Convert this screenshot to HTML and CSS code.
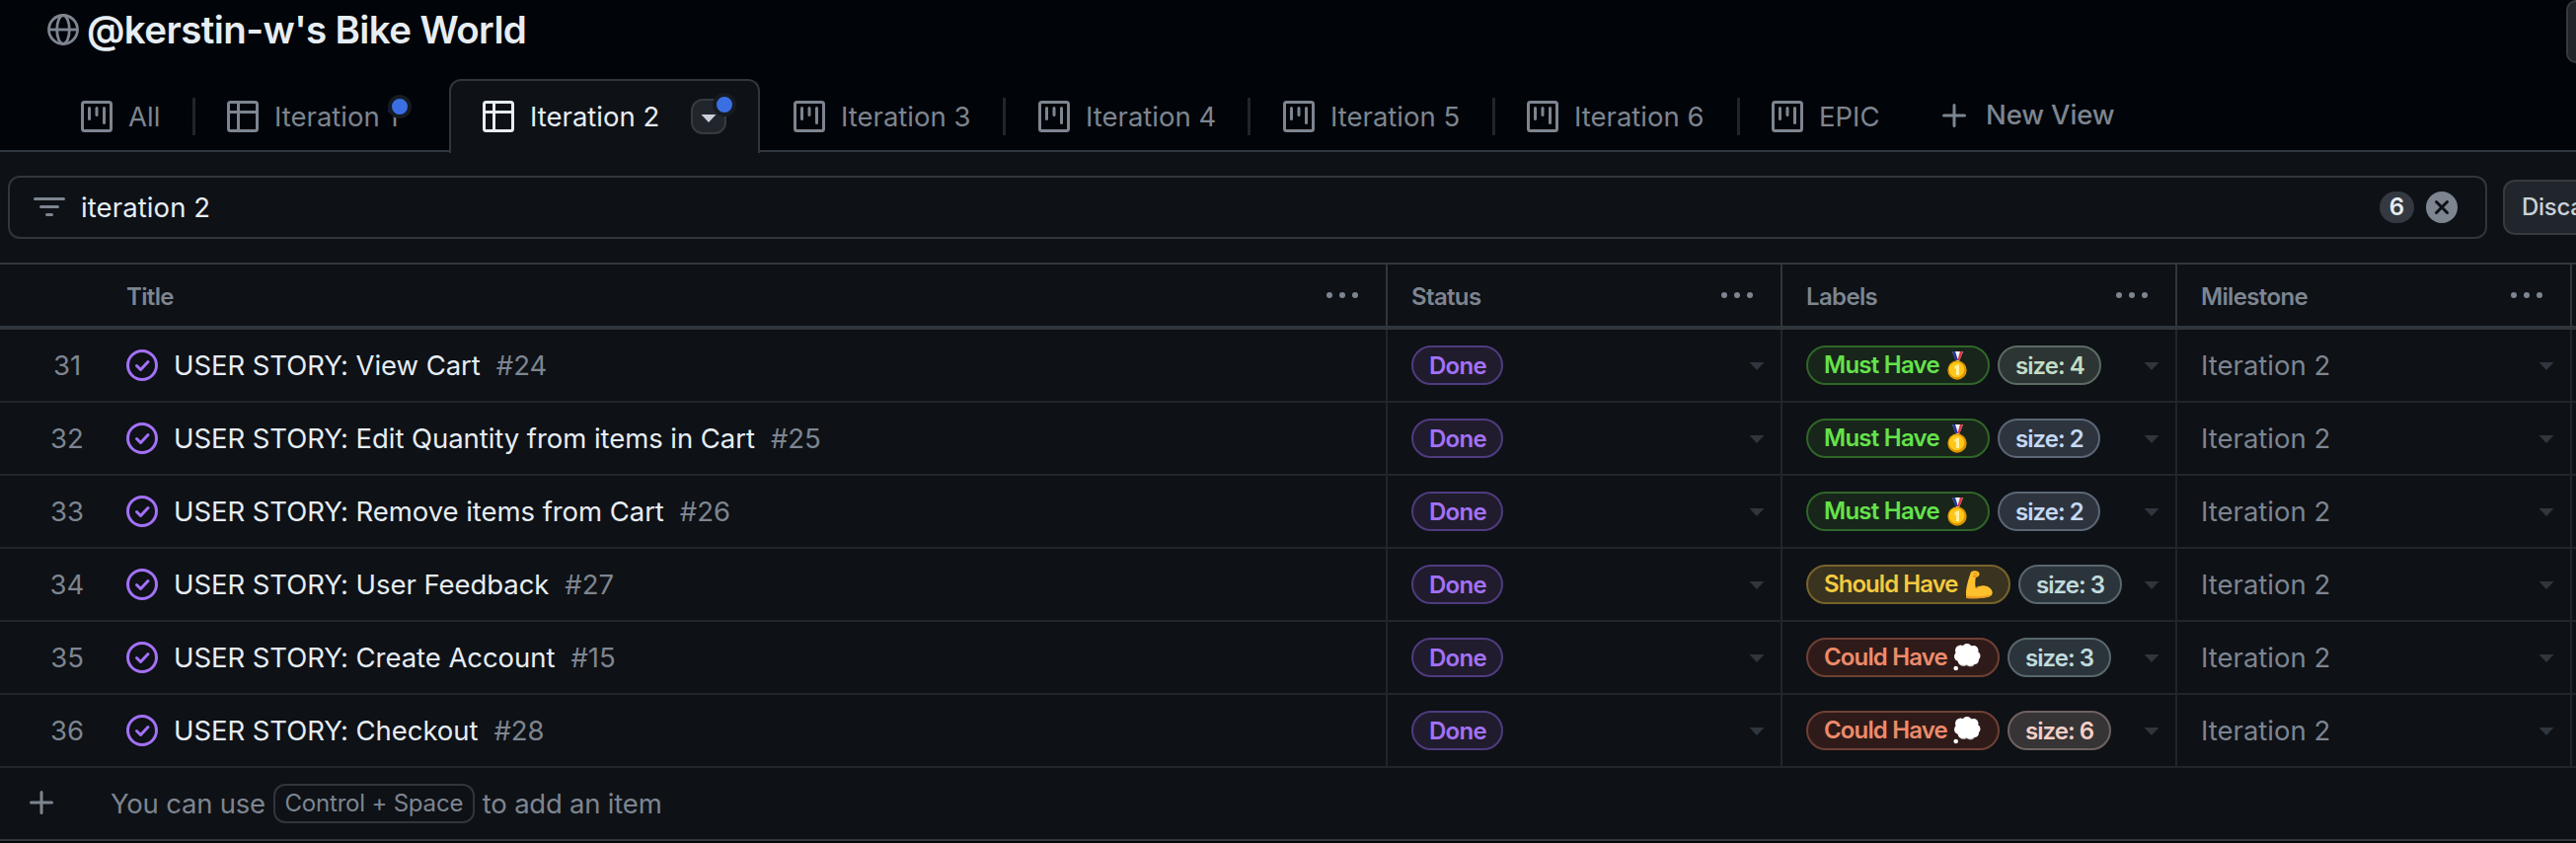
FILE: index.html
```html
<!DOCTYPE html>
<html lang="en">
<head>
<meta charset="utf-8">
<title>@kerstin-w's Bike World</title>
<link rel="stylesheet" href="styles.css">
</head>
<body>
<svg class="defs" aria-hidden="true">
  <symbol id="board" viewBox="0 0 32 32"><rect x="1.5" y="1.5" width="29" height="29" rx="2" fill="none" stroke="currentColor" stroke-width="3"/><path d="M8.5 7.5v11M16 7.5v7M23.5 7.5v15" fill="none" stroke="currentColor" stroke-width="3" stroke-linecap="round"/></symbol>
  <symbol id="grid" viewBox="0 0 32 32"><rect x="1.5" y="1.5" width="29" height="29" rx="2" fill="none" stroke="currentColor" stroke-width="3"/><path d="M1.5 11.5h29M11.5 1.5v29" fill="none" stroke="currentColor" stroke-width="3"/></symbol>
  <symbol id="check" viewBox="0 0 32 32"><circle cx="16" cy="16" r="14.5" fill="none" stroke="currentColor" stroke-width="3"/><path d="M10.5 16.5l4 4 7.500-8" fill="none" stroke="currentColor" stroke-width="3" stroke-linecap="round" stroke-linejoin="round"/></symbol>
  <symbol id="plus" viewBox="0 0 24 24"><path d="M12 1.500v21M1.500 12h21" fill="none" stroke="currentColor" stroke-width="3" stroke-linecap="round"/></symbol>
  <symbol id="dots" viewBox="0 0 32 6"><circle cx="3" cy="3" r="3"/><circle cx="16" cy="3" r="3"/><circle cx="29" cy="3" r="3"/></symbol>
  <symbol id="caret" viewBox="0 0 16 8"><path d="M.5 0h15L8 8z"/></symbol>
  <symbol id="medal" viewBox="0 0 20 29"><path d="M5 0l4 10h3L16 0z" fill="#f1f3f8"/><path d="M5 0h3l3 9H8z" fill="#263a94"/><path d="M15.800 0h-3L10.500 9h2z" fill="#dd3340"/><circle cx="10" cy="19" r="9.700" fill="#dc9600"/><circle cx="9.500" cy="18.500" r="7.800" fill="#ffc717"/><path d="M7 16l3-2.500h2V24H9v-7l-1.500 1z" fill="#fff0a0"/></symbol>
  <symbol id="arm" viewBox="0 0 28 29"><path d="M6 1.500C8.500-.3 14-.2 14.500 3c.3 2.500-2 3.500-4 4.500.3 3-1 7 .5 10.500 3.500-3.500 11-4 15 .5 3 3.500 2 7.500-3 8.500-7 1.200-15 1.500-21.500 1C-.5 21 3 10 6 1.500z" fill="#ffc02d"/><path d="M1.300 25.500c7 1.500 17 1 25-1-1 1.500-2 2.200-3.500 2.500-7 1.200-15 1.500-21.500 1z" fill="#ee9820"/><path d="M8.500 3h4M8 5.800l4-.5M11 18c1-1 1.500-1.500 3-2" fill="none" stroke="#dd8418" stroke-width="1.200"/></symbol>
  <symbol id="cloud" viewBox="0 0 28 28"><g fill="#fff"><circle cx="7.500" cy="7" r="5.500"/><circle cx="14" cy="5" r="5"/><circle cx="20.500" cy="7" r="5"/><circle cx="23" cy="12.500" r="4.500"/><circle cx="6" cy="13" r="5"/><circle cx="10" cy="17" r="5.500"/><circle cx="17" cy="18" r="5"/><circle cx="21.500" cy="16.500" r="4.500"/><path d="M6 6h16v12H6z"/><circle cx="2.700" cy="25" r="2.300"/></g><path d="M7 21c2 1.500 5 1.500 7 .5 2 2 6 2 8-1" fill="none" stroke="#ccc" stroke-width="1"/></symbol>
</svg>
<header class="top">
  <div class="heading">
    <svg class="globe" viewBox="0 0 32 32" stroke="currentColor" stroke-width="2.800"><circle cx="16" cy="16" r="14.500"/><ellipse cx="16" cy="16" rx="6.300" ry="14.500"/><path d="M1.500 16h29"/></svg>
    <h1>@kerstin-w's Bike World</h1>
    <button class="corner" aria-label="More"></button>
  </div>
  <nav class="tabs">
    <a class="tab first sep"><svg><use href="#board"/></svg><span>All</span></a>
    <a class="tab second"><svg><use href="#grid"/></svg><span>Iteration 1</span><i class="dot"></i></a>
    <a class="tab active"><svg><use href="#grid"/></svg><span>Iteration 2</span><b class="menu"><svg><use href="#caret"/></svg><i class="dot"></i></b></a>
    <a class="tab sep"><svg><use href="#board"/></svg><span>Iteration 3</span></a>
    <a class="tab sep"><svg><use href="#board"/></svg><span>Iteration 4</span></a>
    <a class="tab sep"><svg><use href="#board"/></svg><span>Iteration 5</span></a>
    <a class="tab sep sixth"><svg><use href="#board"/></svg><span>Iteration 6</span></a>
    <a class="tab epic"><svg><use href="#board"/></svg><span>EPIC</span></a>
    <a class="new"><svg><use href="#plus"/></svg><span>New View</span></a>
  </nav>
</header>
<section class="filters">
  <div class="search">
    <svg class="funnel" viewBox="0 0 32 20"><path d="M1.500 1.500h29M7.500 9.500h17M13.500 17.500h5" stroke="currentColor" stroke-width="3" stroke-linecap="round"/></svg>
    <span class="query">iteration 2</span>
    <span class="count">6</span>
    <svg class="clear" viewBox="0 0 32 32"><circle cx="16" cy="16" r="16" fill="#7d8590"/><path d="M10.500 10.500l11 11M21.500 10.500l-11 11" stroke="#0e1116" stroke-width="3" stroke-linecap="round"/></svg>
  </div>
  <button class="discard">Discard</button>
</section>
<main class="table">
  <div class="row head">
    <div class="cell title"><span>Title</span><svg><use href="#dots"/></svg></div>
    <div class="cell"><span>Status</span><svg><use href="#dots"/></svg></div>
    <div class="cell"><span>Labels</span><svg><use href="#dots"/></svg></div>
    <div class="cell"><span>Milestone</span><svg><use href="#dots"/></svg></div>
  </div>
  <div class="row">
    <div class="cell title"><span class="num">31</span><svg class="done"><use href="#check"/></svg><span class="name">USER STORY: View Cart</span><span class="id">#24</span></div>
    <div class="cell"><span class="pill status">Done</span><svg class="caret"><use href="#caret"/></svg></div>
    <div class="cell"><span class="pill must">Must Have<svg><use href="#medal"/></svg></span><span class="pill size s4">size: 4</span><svg class="caret"><use href="#caret"/></svg></div>
    <div class="cell"><span class="it">Iteration 2</span><svg class="caret"><use href="#caret"/></svg></div>
  </div>
  <div class="row">
    <div class="cell title"><span class="num">32</span><svg class="done"><use href="#check"/></svg><span class="name">USER STORY: Edit Quantity from items in Cart</span><span class="id">#25</span></div>
    <div class="cell"><span class="pill status">Done</span><svg class="caret"><use href="#caret"/></svg></div>
    <div class="cell"><span class="pill must">Must Have<svg><use href="#medal"/></svg></span><span class="pill size s2">size: 2</span><svg class="caret"><use href="#caret"/></svg></div>
    <div class="cell"><span class="it">Iteration 2</span><svg class="caret"><use href="#caret"/></svg></div>
  </div>
  <div class="row">
    <div class="cell title"><span class="num">33</span><svg class="done"><use href="#check"/></svg><span class="name">USER STORY: Remove items from Cart</span><span class="id">#26</span></div>
    <div class="cell"><span class="pill status">Done</span><svg class="caret"><use href="#caret"/></svg></div>
    <div class="cell"><span class="pill must">Must Have<svg><use href="#medal"/></svg></span><span class="pill size s2">size: 2</span><svg class="caret"><use href="#caret"/></svg></div>
    <div class="cell"><span class="it">Iteration 2</span><svg class="caret"><use href="#caret"/></svg></div>
  </div>
  <div class="row">
    <div class="cell title"><span class="num">34</span><svg class="done"><use href="#check"/></svg><span class="name">USER STORY: User Feedback</span><span class="id">#27</span></div>
    <div class="cell"><span class="pill status">Done</span><svg class="caret"><use href="#caret"/></svg></div>
    <div class="cell"><span class="pill should">Should Have<svg><use href="#arm"/></svg></span><span class="pill size s3">size: 3</span><svg class="caret"><use href="#caret"/></svg></div>
    <div class="cell"><span class="it">Iteration 2</span><svg class="caret"><use href="#caret"/></svg></div>
  </div>
  <div class="row">
    <div class="cell title"><span class="num">35</span><svg class="done"><use href="#check"/></svg><span class="name">USER STORY: Create Account</span><span class="id">#15</span></div>
    <div class="cell"><span class="pill status">Done</span><svg class="caret"><use href="#caret"/></svg></div>
    <div class="cell"><span class="pill could">Could Have<svg><use href="#cloud"/></svg></span><span class="pill size s3">size: 3</span><svg class="caret"><use href="#caret"/></svg></div>
    <div class="cell"><span class="it">Iteration 2</span><svg class="caret"><use href="#caret"/></svg></div>
  </div>
  <div class="row">
    <div class="cell title"><span class="num">36</span><svg class="done"><use href="#check"/></svg><span class="name">USER STORY: Checkout</span><span class="id">#28</span></div>
    <div class="cell"><span class="pill status">Done</span><svg class="caret"><use href="#caret"/></svg></div>
    <div class="cell"><span class="pill could">Could Have<svg><use href="#cloud"/></svg></span><span class="pill size s6">size: 6</span><svg class="caret"><use href="#caret"/></svg></div>
    <div class="cell"><span class="it">Iteration 2</span><svg class="caret"><use href="#caret"/></svg></div>
  </div>
  <div class="add"><svg><use href="#plus"/></svg><span>You can use</span><kbd>Control + Space</kbd><span>to add an item</span></div>
</main>
</body>
</html>
```
FILE: styles.css
```css
* { box-sizing: border-box; }
body { margin: 0; width: 2610px; height: 854px; overflow: hidden; background: #010409; color: #e6edf3; font: 400 27.5px/40px Inter, sans-serif; white-space: nowrap; }
svg { display: block; flex: none; fill: currentColor; }
.defs { display: none; }
button { font: inherit; color: inherit; }
.top { height: 154px; background: #010409; border-bottom: 2px solid #30363d; }
.heading { height: 80px; display: flex; align-items: flex-start; padding-left: 48px; }
.globe { width: 32px; height: 32px; margin-top: 14px; color: #7d8590; fill: none; }
h1 { margin: 5px 0 0 8px; font-size: 38.5px; line-height: 50px; font-weight: 600; letter-spacing: -.6px; }
.corner { margin-left: auto; width: 10px; height: 64px; padding: 0; border: 2px solid #363b42; border-right: 0; border-radius: 12px 0 0 12px; background: #21262d; }
.tabs { display: flex; height: 74px; color: #7d8590; }
.tab { display: flex; align-items: center; flex: none; width: 248px; height: 74px; padding: 1px 0 0 33px; position: relative; }
.tab > svg { width: 32px; height: 32px; margin-right: 16px; }
.sep::after { content: ""; width: 3px; height: 38px; margin-left: auto; background: #21262d; }
.first { width: 198px; padding-left: 82px; }
.second { width: 257px; padding-left: 32px; }
.second .dot { left: 195px; top: 16px; }
.active { width: 315px; height: 75px; border: 2px solid #30363d; border-bottom: 0; border-radius: 12px 12px 0 0; background: #0e1116; color: #e6edf3; padding: 0 0 2px 32px; }
.active::after { content: ""; position: absolute; left: 0; right: 0; bottom: -1px; height: 3px; background: #0e1116; }
.active + .tab { width: 249px; padding-left: 34px; }
.sixth { padding-left: 32px; }
.epic { width: 205px; padding-left: 32px; }
.menu { position: relative; display: flex; align-items: center; justify-content: center; margin-left: auto; margin-right: 32px; width: 36px; height: 36px; border: 2px solid #363b42; border-radius: 12px; background: #21262d; color: #c9d1d9; }
.menu svg { width: 16px; height: 8px; margin-top: 4px; }
.dot { position: absolute; width: 24px; height: 24px; border: 4px solid #161b22; border-radius: 50%; background: #3a6fe4; }
.menu .dot { left: 20px; top: -8px; }
.new { display: flex; align-items: center; font-weight: 500; letter-spacing: -.15px; }
.new svg { width: 24px; height: 24px; margin: -1px 20px 0 0; }
.new span { margin-top: -2px; }
.filters { display: flex; align-items: flex-start; gap: 16px; height: 112px; padding: 24px 0 0 8px; background: #0e1116; }
.search { display: flex; align-items: center; flex: none; width: 2512px; height: 64px; padding: 0 28px 0 24px; border: 2px solid #30363d; border-radius: 12px; }
.funnel { width: 32px; height: 20px; color: #7d8590; }
.query { margin: 0 auto 0 16px; letter-spacing: .1px; }
.count { width: 35px; height: 32px; border-radius: 16px; margin-right: 12px; background: #343941; font-size: 24px; line-height: 32px; font-weight: 600; text-align: center; }
.clear { width: 32px; height: 32px; }
.discard { flex: none; width: 130px; height: 56px; margin-top: 4px; padding: 0 0 0 17px; border: 2px solid #363b42; border-radius: 12px; background: #21262d; color: #c9d1d9; font-size: 24px; font-weight: 500; letter-spacing: -.3px; text-align: left; }
.table { height: 586px; background: #0e1116; }
.row { display: grid; grid-template-columns: 1406px 400px 400px 400px 1fr; height: 74px; border-bottom: 2px solid #21262d; }
.cell { display: flex; align-items: center; padding: 0 16px 0 24px; border-right: 2px solid #21262d; }
.head { height: 68px; border-top: 2px solid #30363d; border-bottom: 4px solid #30363d; color: #7d8590; font-size: 24px; font-weight: 600; letter-spacing: -.65px; }
.head .cell { padding-right: 28px; border-color: #30363d; }
.head span { margin-top: 3px; }
.head svg { width: 32px; height: 6px; margin: 0 0 0 auto; }
.cell .caret { width: 16px; height: 8px; margin: 2px 0 0 auto; color: #30363d; }
.head .title { padding-left: 128px; }
.row .title { padding-left: 24px; }
.row.head .title { padding-left: 128px; }
.row .num { width: 56px; margin-left: 16px; text-align: center; color: #7d8590; }
.done { width: 32px; height: 32px; margin: 0 16px 0 32px; color: #a371f7; }
.name { letter-spacing: -.06px; }
.id { margin-left: 16px; color: #7d8590; }
.it { color: #7d8590; }
.pill { display: flex; align-items: center; height: 40px; padding: 0 0 0 16px; border: 2px solid; border-radius: 20px; font-size: 24px; font-weight: 600; letter-spacing: -.75px; }
.status { width: 93px; padding-top: 1px; color: #a371f7; background: #201c2d; border-color: #4f3b80; }
.must { width: 186px; color: #65e24c; background: #18251a; border-color: #2f6629; }
.should { width: 207px; color: #f4ca3f; background: #39331f; border-color: #77632a; letter-spacing: -.95px; }
.could { width: 196px; color: #ed8b6b; background: #2e1b19; border-color: #6e4034; letter-spacing: -.85px; }
.pill svg { width: 20px; height: 29px; margin-left: auto; margin-right: 21px; }
.should svg { width: 28px; margin-right: 16px; }
.could svg { width: 28px; height: 28px; margin-right: 17px; }
.size { width: 105px; margin-left: 8px; padding-top: 1px; letter-spacing: -.95px; }
.s4 { color: #c2dcc5; background: #2d3434; border-color: #5b6b62; }
.s2 { width: 104px; color: #c5d8f4; background: #2d343e; border-color: #5b6676; }
.s3 { color: #c0dbdd; background: #2c343b; border-color: #58686d; }
.s6 { color: #f4cfc6; background: #363435; border-color: #6f6261; }
.add { display: flex; align-items: center; height: 74px; border-bottom: 2px solid #30363d; color: #7d8590; padding-left: 30px; letter-spacing: -.22px; }
.add > svg { width: 24px; height: 24px; margin: -3px 58px 0 0; }
.add span { margin-top: -1px; }
kbd { width: 204px; height: 40px; margin: 0 8px; border: 2px solid #30363d; border-radius: 12px; font: 400 24px/36px Inter, sans-serif; letter-spacing: -.2px; text-align: center; }
```
